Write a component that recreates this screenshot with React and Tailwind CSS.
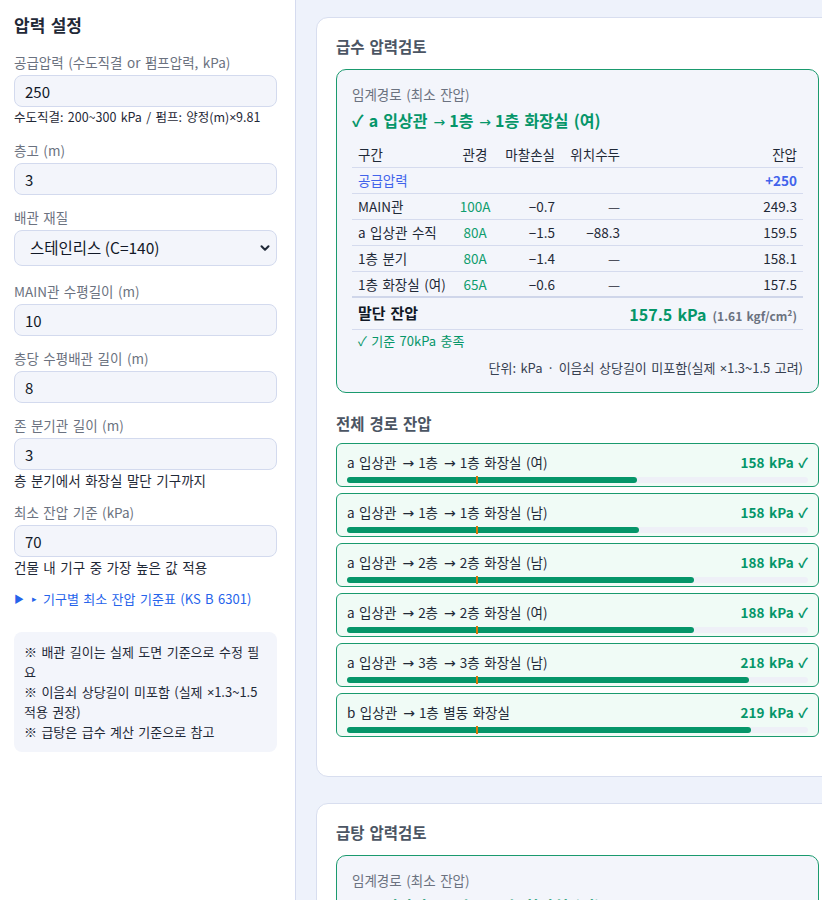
import { ChevronDown } from 'lucide-react';

const rows = [
  { name: '공급압력', size: '', loss: '', head: '', rest: '+250', supply: true },
  { name: 'MAIN관', size: '100A', loss: '−0.7', head: '—', rest: '249.3' },
  { name: 'a 입상관 수직', size: '80A', loss: '−1.5', head: '−88.3', rest: '159.5' },
  { name: '1층 분기', size: '80A', loss: '−1.4', head: '—', rest: '158.1' },
  { name: '1층 화장실 (여)', size: '65A', loss: '−0.6', head: '—', rest: '157.5' },
];

const routes = [
  { label: 'a 입상관 → 1층 → 1층 화장실 (여)', kpa: 157.5 },
  { label: 'a 입상관 → 1층 → 1층 화장실 (남)', kpa: 158.1 },
  { label: 'a 입상관 → 2층 → 2층 화장실 (남)', kpa: 188.0 },
  { label: 'a 입상관 → 2층 → 2층 화장실 (여)', kpa: 188.2 },
  { label: 'a 입상관 → 3층 → 3층 화장실 (남)', kpa: 218.1 },
  { label: 'b 입상관 → 1층 별동 화장실', kpa: 219.2 },
];

// splits "a → b" so the arrows can get a wider glyph like the reference
function Path({ text }) {
  const parts = text.split(' → ');
  return (
    <>
      {parts.map((p, i) => (
        <span key={i}>
          {i > 0 && <span className="ml-[6px] mr-[4px] font-['DejaVu_Sans'] text-[14px] leading-none font-normal">→</span>}
          {p}
        </span>
      ))}
    </>
  );
}

// latin multiply sign (the CJK font draws it full width)
const Mul = ({ children }) => <span className="font-['Noto_Sans'] tracking-[-0.3px]">{children}</span>;

function Field({ label, value, help, helpSize = 'text-[13.5px]' }) {
  return (
    <div className="mb-[13px]">
      <div className="text-[13.5px] leading-[18px] text-[#6b7280] mb-1">{label}</div>
      <input
        defaultValue={value}
        className="w-full h-8 rounded-lg border border-[#d3daee] bg-[#f3f5fb] px-[10px] text-[15px] text-[#111827] outline-none"
      />
      {help && <div className={`${helpSize} leading-5 text-[#1f2937]`}>{help}</div>}
    </div>
  );
}

function Sidebar() {
  return (
    <aside className="w-[296px] shrink-0 bg-white border-r border-[#d5dbef] pl-[14px] pr-[18px] pt-[14px]">
      <div className="text-[17px] font-bold leading-[22px] text-[#1f2937] mb-[17px]">압력 설정</div>
      <Field
        label="공급압력 (수도직결 or 펌프압력, kPa)"
        value="250"
        help={<>수도직결: 200~300 kPa / 펌프: 양정(m)<Mul>×</Mul>9.81</>}
        helpSize="text-[12.5px]"
      />
      <Field label="층고 (m)" value="3" />
      <div className="mb-[16px]">
        <div className="text-[13.5px] leading-[18px] text-[#6b7280] mb-1">배관 재질</div>
        <div className="relative">
          <select className="w-full h-9 appearance-none rounded-lg border border-[#d3daee] bg-[#f3f5fb] pl-[15px] text-[15.5px] text-[#111827] outline-none">
            <option>스테인리스 (C=140)</option>
          </select>
          <ChevronDown size={14} strokeWidth={3.5} className="absolute right-[5px] top-[11px] text-[#1f2937]" />
        </div>
      </div>
      <Field label="MAIN관 수평길이 (m)" value="10" />
      <Field label="층당 수평배관 길이 (m)" value="8" />
      <Field label="존 분기관 길이 (m)" value="3" help="층 분기에서 화장실 말단 기구까지" />
      <Field label="최소 잔압 기준 (kPa)" value="70" help="건물 내 기구 중 가장 높은 값 적용" />
      <div className="mt-[10px] text-[13px] leading-[18px] text-[#2563eb] flex items-center">
        <span className="text-[10px] mr-[8px]">▶</span>
        <span className="text-[9px] mr-[6px]">▸</span>
        <span>기구별 최소 잔압 기준표 (KS B 6301)</span>
      </div>
      <div className="mt-[24px] break-all rounded-lg bg-[#f3f5fb] px-[10px] py-[10px] text-[13px] leading-5 text-[#1f2937]">
        <div>※ 배관 길이는 실제 도면 기준으로 수정 필요</div>
        <div>※ 이음쇠 상당길이 미포함 (실제 <span className="whitespace-nowrap"><Mul>×</Mul>1.3~1.5</span> 적용 권장)</div>
        <div>※ 급탕은 급수 계산 기준으로 참고</div>
      </div>
    </aside>
  );
}

function Row({ cells, className }) {
  return (
    <div className={`grid grid-cols-[104px_38px_67px_65px_1fr] items-center ${className}`}>
      {cells}
    </div>
  );
}

function CriticalBox() {
  return (
    <div className="rounded-[10px] border border-[#1a9a6e] bg-[#f3f5fb] px-[15px] pt-[15px] pb-[15px]">
      <div className="text-[13.5px] leading-[18px] text-[#6b7280]">임계경로 (최소 잔압)</div>
      <div className="mt-[6px] text-[16px] font-bold leading-[22px] text-[#059669]">
        ✓ <Path text="a 입상관 → 1층 → 1층 화장실 (여)" />
      </div>
      <div className="mt-[10px] text-[13.5px] text-[#1f2937]">
        <Row
          className="h-[27px] border-b border-[#d5dbee]"
          cells={[
            <div key="a" className="px-[6px]">구간</div>,
            <div key="b" className="text-center">관경</div>,
            <div key="c" className="text-right pr-[6px] whitespace-nowrap">마찰손실</div>,
            <div key="d" className="text-right pr-[6px] whitespace-nowrap">위치수두</div>,
            <div key="e" className="text-right pr-[6px]">잔압</div>,
          ]}
        />
        {rows.map((r, i) => (
          <Row
            key={r.name}
            className={`h-[26px] ${i === rows.length - 1 ? 'border-b-2 border-[#cfd6ea]' : 'border-b border-[#d5dbee]'}`}
            cells={[
              <div key="a" className={`px-[6px] whitespace-nowrap ${r.supply ? 'text-[#4263eb]' : ''}`}>{r.name}</div>,
              <div key="b" className="text-center text-[#0f9d6e]">{r.size}</div>,
              <div key="c" className="text-right pr-[6px]">{r.loss}</div>,
              <div key="d" className="text-right pr-[6px]">{r.head}</div>,
              <div key="e" className={`text-right pr-[6px] ${r.supply ? 'font-bold text-[#4263eb]' : ''}`}>{r.rest}</div>,
            ]}
          />
        ))}
        <div className="flex h-[32px] items-center justify-between border-b border-[#d5dbee] px-[6px]">
          <span className="text-[15px] font-bold text-[#111827]">말단 잔압</span>
          <span>
            <span className="text-[16px] font-bold text-[#059669]">157.5 kPa</span>
            <span className="ml-[6px] text-[12px] font-bold text-[#6b7280]">(1.61 kgf/cm²)</span>
          </span>
        </div>
        <div className="mt-[2px] px-[6px] text-[13px] leading-[18px] text-[#059669]">✓ 기준 70kPa 충족</div>
        <div className="mt-[9px] text-right text-[13px] leading-[18px] text-[#374151]">
          단위: kPa · 이음쇠 상당길이 미포함(실제 <Mul>×</Mul>1.3~1.5 고려)
        </div>
      </div>
    </div>
  );
}

function RouteCard({ label, kpa }) {
  const pct = Math.min(100, (kpa / 250) * 100);
  return (
    <div className="rounded-md border border-[#1a9a6e] bg-[#f0fbf6] px-[10px] pt-[8px] pb-[3px]">
      <div className="flex h-5 items-center justify-between leading-5">
        <span className="text-[13.5px] text-[#1f2937]"><Path text={label} /></span>
        <span className="text-[13.5px] font-bold text-[#059669]">{Math.round(kpa)} kPa ✓</span>
      </div>
      <div className="relative mt-[5px] h-[6px] rounded-full bg-[#eef0f7]">
        <div className="h-full rounded-full bg-[#059669]" style={{ width: `${pct}%` }} />
        <div className="absolute left-[28%] top-[-1px] h-[8px] w-[1.5px] bg-[#d97706]" />
      </div>
    </div>
  );
}

export default function App() {
  return (
    <div className="flex h-screen overflow-hidden [word-spacing:1.5px] font-['Noto_Sans_CJK_KR','Noto_Sans',sans-serif]">
      <Sidebar />
      <main className="flex-1 min-w-0 overflow-hidden bg-[#eef2fb] pl-5 pt-[17px]">
        <section className="w-[523px] rounded-xl border border-[#d8deef] bg-white px-[19px] pt-[18px] pb-[39px] mb-[26px]">
          <h2 className="mb-[13px] text-[15.5px] font-bold leading-5 text-[#4b5563]">급수 압력검토</h2>
          <CriticalBox />
          <h3 className="mt-5 mb-[10px] text-[15.5px] font-bold leading-5 text-[#4b5563]">전체 경로 잔압</h3>
          <div className="flex flex-col gap-[6px]">
            {routes.map((r) => (
              <RouteCard key={r.label} {...r} />
            ))}
          </div>
        </section>
        <section className="w-[523px] rounded-xl border border-[#d8deef] bg-white px-[19px] pt-[18px] pb-[38px]">
          <h2 className="mb-[13px] text-[15.5px] font-bold leading-5 text-[#4b5563]">급탕 압력검토</h2>
          <CriticalBox />
        </section>
      </main>
    </div>
  );
}
